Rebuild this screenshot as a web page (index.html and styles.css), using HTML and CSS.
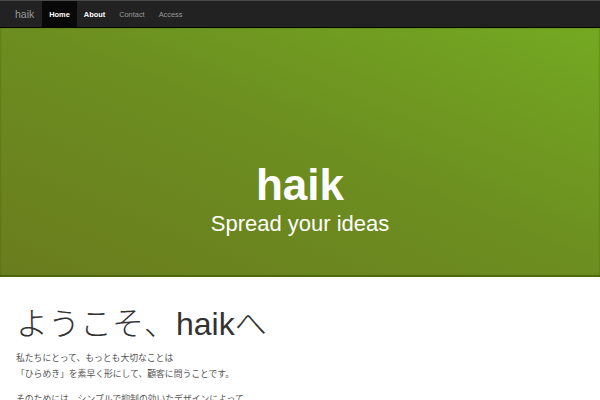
FILE: index.html
```html
<!DOCTYPE html>
<html lang="ja">
<head>
<meta charset="utf-8">
<link rel="stylesheet" href="styles.css">
</head>
<body>
<div class="navbar">
  <a class="brand">haik</a>
  <ul class="nav">
    <li class="active"><a>Home</a></li>
    <li class="hover"><a>About</a></li>
    <li><a>Contact</a></li>
    <li><a>Access</a></li>
  </ul>
</div>
<div class="hero">
  <h1 class="hero-title">haik</h1>
  <p class="hero-sub">Spread your ideas</p>
</div>
<div class="content">
  <h2 class="welcome">ようこそ、haikへ</h2>
  <p class="lead">私たちにとって、もっとも大切なことは<br>「ひらめき」を素早く形にして、顧客に問うことです。</p>
  <p class="lead">そのためには、シンプルで抑制の効いたデザインによって</p>
</div>
</body>
</html>
```
FILE: styles.css
```css
html, body { margin: 0; padding: 0; background: #fff; }
body { font-family: "Liberation Sans", Arial, "Noto Sans CJK JP", sans-serif; color: #333; overflow: hidden; height: 400px; }
.navbar {
  background: #222;
  border-top: 1px solid #4a4a4a;
  border-bottom: 1px solid #050505;
  display: flex;
  align-items: stretch;
  box-sizing: border-box;
  height: 28px;
}
.brand { color: #999; font-size: 10.5px; padding: 0 8px 0 15px; display: flex; align-items: center; }
.nav { list-style: none; margin: 0; padding: 0; display: flex; }
.nav li { display: flex; }
.nav a { color: #999; font-size: 7.4px; padding: 0 7px; display: flex; align-items: center; }
.nav .active a { background: #080808; color: #fff; font-weight: bold; }
.nav .hover a { color: #fff; font-weight: bold; }
.hero {
  height: 249px;
  background: linear-gradient(to top right, #6a7c1e 0%, #6c8d20 50%, #74a922 100%);
  box-shadow: inset 0 -2px 1px rgba(60,90,0,0.6), inset 0 0 2px rgba(60,90,0,0.5);
  display: flex; flex-direction: column; align-items: center; justify-content: flex-end;
  padding-bottom: 40px; box-sizing: border-box; color: #fff;
}
.hero-title { margin: 0; font-size: 44px; font-weight: bold; line-height: 1; }
.hero-sub { margin: 4px 0 0; font-size: 22px; line-height: 1.2; }
.content { padding: 0 16px; }
.welcome { margin: 28px 0 0; font-size: 32px; font-weight: 200; line-height: 38px; color: #333; font-family: "Liberation Sans", "Noto Sans CJK JP", sans-serif; }
.lead { font-size: 8.8px; line-height: 16px; margin: 7px 0 0; color: #555; }
.lead + .lead { margin-top: 9px; }
```
